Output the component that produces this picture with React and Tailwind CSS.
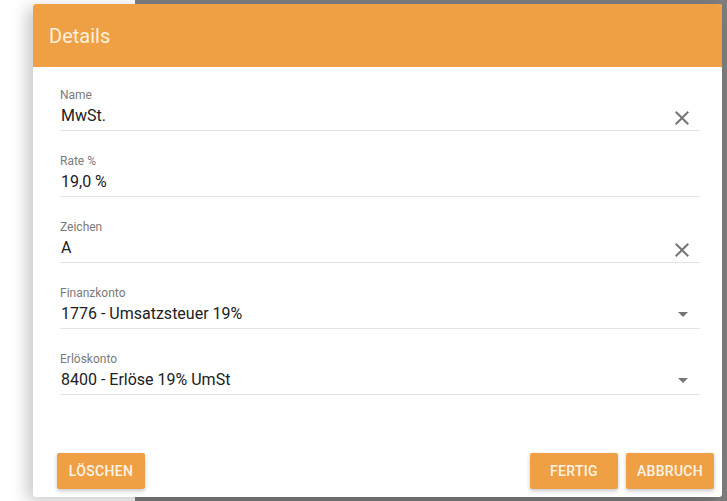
import React from "react";

const CloseIcon = () => (
  <svg viewBox="0 0 24 24" className="w-6 h-6 fill-[#757575]">
    <path d="M19 6.41L17.59 5 12 10.59 6.41 5 5 6.41 10.59 12 5 17.59 6.41 19 12 13.41 17.59 19 19 17.59 13.41 12z" />
  </svg>
);

const ArrowDropDown = () => (
  <svg viewBox="0 0 24 24" className="w-6 h-6 fill-[#757575]">
    <path d="M7 8l5 5 5-5z" />
  </svg>
);

const Field = ({ label, value, icon }) => (
  <div className="flex flex-col h-[43px]">
    <label className="block h-[14px] text-[12px] leading-[14px] text-[#7a7a7a]">{label}</label>
    <div className="h-[29px] flex items-center justify-between border-b border-[#e2e2e2]">
      <span className="text-[16px] text-[#212121] pl-px">{value}</span>
      {icon === "clear" && (
        <span className="mr-[6px] mt-[4px]">
          <CloseIcon />
        </span>
      )}
      {icon === "select" && (
        <span className="mr-[5px] mt-[4px]">
          <ArrowDropDown />
        </span>
      )}
    </div>
  </div>
);

const Button = ({ children }) => (
  <button className="h-[36px] w-[88px] rounded-[2px] bg-[#f0a044] text-[#fdf3e6] text-[14px] font-medium tracking-[0.3px] uppercase shadow-[0_2px_4px_rgba(0,0,0,0.22)]">
    {children}
  </button>
);

export default function App() {
  return (
    <div
      className="relative w-[727px] h-[501px] flex overflow-hidden"
      style={{ fontFamily: "Roboto, 'Noto Sans', sans-serif" }}
    >
      <div className="w-[135px] bg-white" />
      <div className="flex-1 bg-[#7e7e7e]" />

      <div className="absolute left-[33px] top-[4px] w-[689px] h-[493px] bg-white rounded-[3px] shadow-[-6px_4px_16px_rgba(0,0,0,0.22)] flex flex-col overflow-hidden">
        <div className="h-[63px] bg-[#f0a044] flex items-center px-4">
          <h2 className="text-[20px] text-[#fdf0de]">Details</h2>
        </div>

        <div className="flex-1 flex flex-col gap-[23px] pt-[21px] pl-[27px] pr-[22px]">
          <Field label="Name" value="MwSt." icon="clear" />
          <Field label="Rate %" value="19,0 %" />
          <Field label="Zeichen" value="A" icon="clear" />
          <Field label="Finanzkonto" value="1776 - Umsatzsteuer 19%" icon="select" />
          <Field label="Erlöskonto" value="8400 - Erlöse 19% UmSt" icon="select" />
        </div>

        <div className="flex items-center pl-[24px] pr-[8px] pb-[8px]">
          <Button>Löschen</Button>
          <div className="flex-1" />
          <div className="flex gap-2">
            <Button>Fertig</Button>
            <Button>Abbruch</Button>
          </div>
        </div>
      </div>
    </div>
  );
}
